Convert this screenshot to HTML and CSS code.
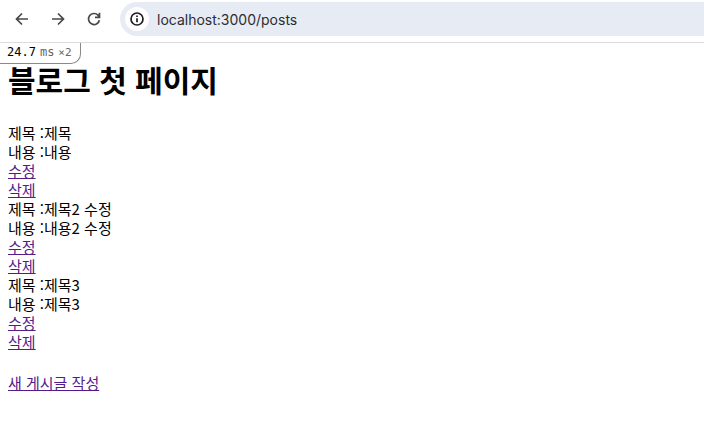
FILE: index.html
```html
<!DOCTYPE html>
<html lang="ko">
<head>
    <meta charset="UTF-8">
    <meta name="viewport" content="width=device-width, initial-scale=1.0">
    <title>블로그 첫 페이지</title>
    <link rel="stylesheet" href="styles.css">
</head>
<body>
    <header class="toolbar">
        <button class="nav-btn" type="button" aria-label="Back">
            <svg viewBox="0 0 16 16"><path d="M14 8H3M8 2.5L2.5 8L8 13.5"/></svg>
        </button>
        <button class="nav-btn" type="button" aria-label="Forward">
            <svg viewBox="0 0 16 16"><path d="M2 8H13M8 2.5L13.5 8L8 13.5"/></svg>
        </button>
        <button class="nav-btn" type="button" aria-label="Reload">
            <svg viewBox="0 0 16 16"><path d="M13.4 9.2A5.5 5.5 0 1 1 12 4.2L13.2 5.6M13.5 1.8V6.3H9"/></svg>
        </button>
        <div class="address-bar">
            <button class="site-info" type="button" aria-label="Site information">
                <svg viewBox="0 0 16 16"><circle cx="8" cy="8" r="6"/><path d="M8 7.2V11.2M8 4.6V6"/></svg>
            </button>
            <input class="url" type="text" aria-label="Address" value="localhost:3000/posts">
        </div>
    </header>

    <main class="page">
        <div class="profiler">
            <span>24.7</span>
            <span class="unit">ms</span>
            <span class="count">×2</span>
        </div>

        <h1>블로그 첫 페이지</h1>

        <div class="post">
            <div>제목 :제목</div>
            <div>내용 :내용</div>
            <div><a href="/posts/1/edit">수정</a></div>
            <div><a href="/posts/1">삭제</a></div>
        </div>
        <div class="post">
            <div>제목 :제목2 수정</div>
            <div>내용 :내용2 수정</div>
            <div><a href="/posts/2/edit">수정</a></div>
            <div><a href="/posts/2">삭제</a></div>
        </div>
        <div class="post">
            <div>제목 :제목3</div>
            <div>내용 :제목3</div>
            <div><a href="/posts/3/edit">수정</a></div>
            <div><a href="/posts/3">삭제</a></div>
        </div>

        <p class="new-post"><a href="/posts/new">새 게시글 작성</a></p>
    </main>
</body>
</html>
```

FILE: styles.css
```css
body {
    margin: 0;
    background: #fff;
    color: #000;
    font-family: "Noto Sans CJK KR", sans-serif;
    font-size: 15px;
    line-height: 19px;
}

.toolbar {
    display: flex;
    align-items: center;
    gap: 12px;
    padding: 2px 0 6px 10px;
    border-bottom: 1px solid #dcdcdc;
}

.nav-btn,
.site-info {
    display: flex;
    align-items: center;
    justify-content: center;
    width: 24px;
    height: 24px;
    padding: 0;
    border: none;
    border-radius: 50%;
    background: none;
}

svg {
    width: 16px;
    height: 16px;
    fill: none;
    stroke: #474747;
    stroke-width: 1.7;
}

.address-bar {
    display: flex;
    flex: 1;
    align-items: center;
    gap: 8px;
    height: 34px;
    margin-left: 2px;
    padding-left: 5px;
    border-radius: 17px 0 0 17px;
    background: #e7ebf4;
}

.site-info {
    background: #fff;
}

.site-info svg {
    stroke: #1f1f1f;
}

.url {
    flex: 1;
    min-width: 0;
    padding: 0;
    border: none;
    outline: none;
    background: none;
    color: #2c2d30;
    font-family: Inter, sans-serif;
    font-size: 14px;
}

.page {
    position: relative;
    padding: 22px 8px;
}

/* render time badge over the corner of the page */
.profiler {
    position: absolute;
    top: 0;
    left: 0;
    display: flex;
    gap: 4px;
    padding: 0 8px 1px 7px;
    border: 1px solid #888;
    border-width: 0 1px 1px 0;
    border-bottom-right-radius: 10px;
    background: #fff;
    font-family: "DejaVu Sans Mono", monospace;
    font-size: 12px;
}

.unit,
.count {
    color: #666;
}

.count {
    font-size: 11px;
}

h1 {
    margin: 0 0 24px;
    font-family: "Liberation Sans", "Noto Sans CJK KR", sans-serif;
    font-size: 30px;
    line-height: 34px;
}

a {
    color: #551a8b;
}

.new-post {
    margin: 22px 0 0;
}
```
